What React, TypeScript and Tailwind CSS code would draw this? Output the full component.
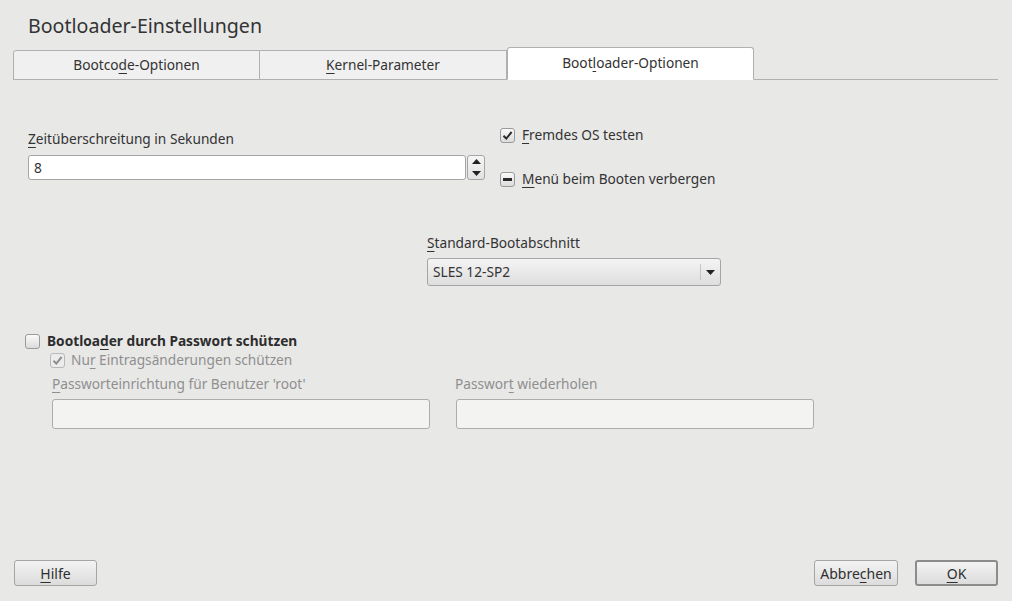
import React from "react";

function U({ children }: { children: React.ReactNode }) {
  return <span className="underline underline-offset-[3px] decoration-[1px]">{children}</span>;
}

function Box({ state, disabled }: { state: "on" | "off" | "mixed"; disabled?: boolean }) {
  return (
    <span
      className={`inline-flex items-center justify-center w-[15px] h-[15px] rounded-[3px] border ${
        disabled ? "border-[#b8b8b8] bg-[#ececec]" : "border-[#9a9a9a] bg-gradient-to-b from-[#fafafa] to-[#dcdcdc]"
      }`}
    >
      {state === "on" && (
        <svg width="11" height="11" viewBox="0 0 11 11">
          <path d="M1.5 5.8 L4.3 8.6 L9.6 2" fill="none" stroke={disabled ? "#8e8e8e" : "#2b2b2b"} strokeWidth="2" />
        </svg>
      )}
      {state === "mixed" && <span className="block w-[9px] h-[3px] bg-[#2b2b2b]" />}
    </span>
  );
}

function Button({ children, def, className }: { children: React.ReactNode; def?: boolean; className?: string }) {
  return (
    <button
      className={`h-[26px] rounded-[3px] bg-gradient-to-b from-[#f3f3f3] to-[#dcdcdc] text-[14px] text-[#2f2f2f] ${
        def ? "border-2 border-[#8c8c8c]" : "border border-[#a5a5a5]"
      } ${className ?? ""}`}
    >
      {children}
    </button>
  );
}

export default function App() {
  const tabs = [
    { label: <>Bootco<U>d</U>e-Optionen</>, active: false },
    { label: <><U>K</U>ernel-Parameter</>, active: false },
    { label: <>Boot<U>l</U>oader-Optionen</>, active: true },
  ];

  return (
    <div
      className="w-[1012px] h-[601px] bg-[#e8e8e7] text-[#333333] text-[13.7px] flex flex-col overflow-hidden"
      style={{ fontFamily: '"Noto Sans", "Open Sans", sans-serif' }}
    >
      <h1 className="pl-[28px] pt-[12px] text-[19.6px] leading-[28px] font-normal text-[#333]">Bootloader-Einstellungen</h1>

      {/* tabs */}
      <div className="mt-[7px] ml-[13px] mr-[14px] flex items-end h-[33px] border-b border-[#b0b0b0]">
        {tabs.map((t, i) => (
          <div
            key={i}
            className={`w-[247px] flex items-center justify-center -mb-px border border-[#b0b0b0] ${
              t.active
                ? "h-[33px] bg-white rounded-t-[3px] border-b-white"
                : "h-[30px] bg-[#f0f0f0] border-b-[#b0b0b0] " + (i === 0 ? "rounded-tl-[3px]" : "border-l-0")
            }`}
          >
            {t.label}
          </div>
        ))}
      </div>

      {/* timeout + checkboxes */}
      <div className="flex mt-[36px]">
        <div className="ml-[28px] w-[457px] pt-[14px]">
          <div className="leading-[18px]">
            <U>Z</U>eitüberschreitung in Sekunden
          </div>
          <div className="flex mt-[7px] h-[25px]">
            <div className="flex-1 bg-white border border-[#a5a5a5] rounded-[3px] px-[5px] leading-[23px]">8</div>
            <div className="w-[18px] flex flex-col border border-[#a5a5a5] rounded-[3px] bg-gradient-to-b from-[#f6f6f6] to-[#e2e2e2] ml-[1px]">
              <div className="flex-1 flex items-center justify-center">
                <svg width="9" height="5" viewBox="0 0 9 5"><path d="M0 5 L4.5 0 L9 5Z" fill="#222" /></svg>
              </div>
              <div className="flex-1 flex items-center justify-center">
                <svg width="9" height="5" viewBox="0 0 9 5"><path d="M0 0 L4.5 5 L9 0Z" fill="#222" /></svg>
              </div>
            </div>
          </div>
        </div>
        <div className="ml-[15px] mt-[9px] flex flex-col">
          <label className="flex items-center gap-[7px] h-[20px]">
            <Box state="on" />
            <span><U>F</U>remdes OS testen</span>
          </label>
          <label className="flex items-center gap-[7px] h-[20px] mt-[24px]">
            <Box state="mixed" />
            <span><U>M</U>enü beim Booten verbergen</span>
          </label>
        </div>
      </div>

      {/* default section */}
      <div className="ml-[427px] mt-[45px] w-[294px]">
        <div className="leading-[18px]">
          <U>S</U>tandard-Bootabschnitt
        </div>
        <div className="mt-[6px] h-[28px] flex items-center border border-[#a5a5a5] rounded-[3px] bg-gradient-to-b from-[#f4f4f4] to-[#dedede]">
          <span className="flex-1 pl-[5px]">SLES 12-SP2</span>
          <span className="h-[16px] w-px bg-[#c4c4c4]" />
          <span className="w-[19px] flex justify-center">
            <svg width="9" height="5" viewBox="0 0 9 5"><path d="M0 0 L4.5 5 L9 0Z" fill="#222" /></svg>
          </span>
        </div>
      </div>

      {/* password */}
      <div className="ml-[25px] mt-[46px]">
        <label className="flex items-center gap-[7px] h-[18px] font-bold text-[#2d2d2d]">
          <Box state="off" />
          <span>Bootloa<U>d</U>er durch Passwort schützen</span>
        </label>
        <label className="ml-[25px] flex items-center gap-[6px] h-[20px] text-[#8f8f8f]">
          <Box state="on" disabled />
          <span>Nu<U>r</U> Eintragsänderungen schützen</span>
        </label>
        <div className="flex ml-[27px] mt-[5px] gap-[26px]">
          <div className="w-[378px]">
            <div className="leading-[18px] text-[#8f8f8f]">
              <U>P</U>assworteinrichtung für Benutzer 'root'
            </div>
            <div className="mt-[6px] h-[30px] bg-[#f3f3f2] border border-[#adadad] rounded-[3px]" />
          </div>
          <div className="w-[358px]">
            <div className="leading-[18px] text-[#8f8f8f] -ml-[1px]">
              Passwor<U>t</U> wiederholen
            </div>
            <div className="mt-[6px] h-[30px] bg-[#f3f3f2] border border-[#adadad] rounded-[3px]" />
          </div>
        </div>
      </div>

      {/* buttons */}
      <div className="mt-auto mb-[15px] flex items-center px-[14px]">
        <Button className="w-[83px]"><U>H</U>ilfe</Button>
        <div className="flex-1" />
        <Button className="w-[84px]">Abbre<U>c</U>hen</Button>
        <Button def className="w-[83px] ml-[17px]"><U>O</U>K</Button>
      </div>
    </div>
  );
}
